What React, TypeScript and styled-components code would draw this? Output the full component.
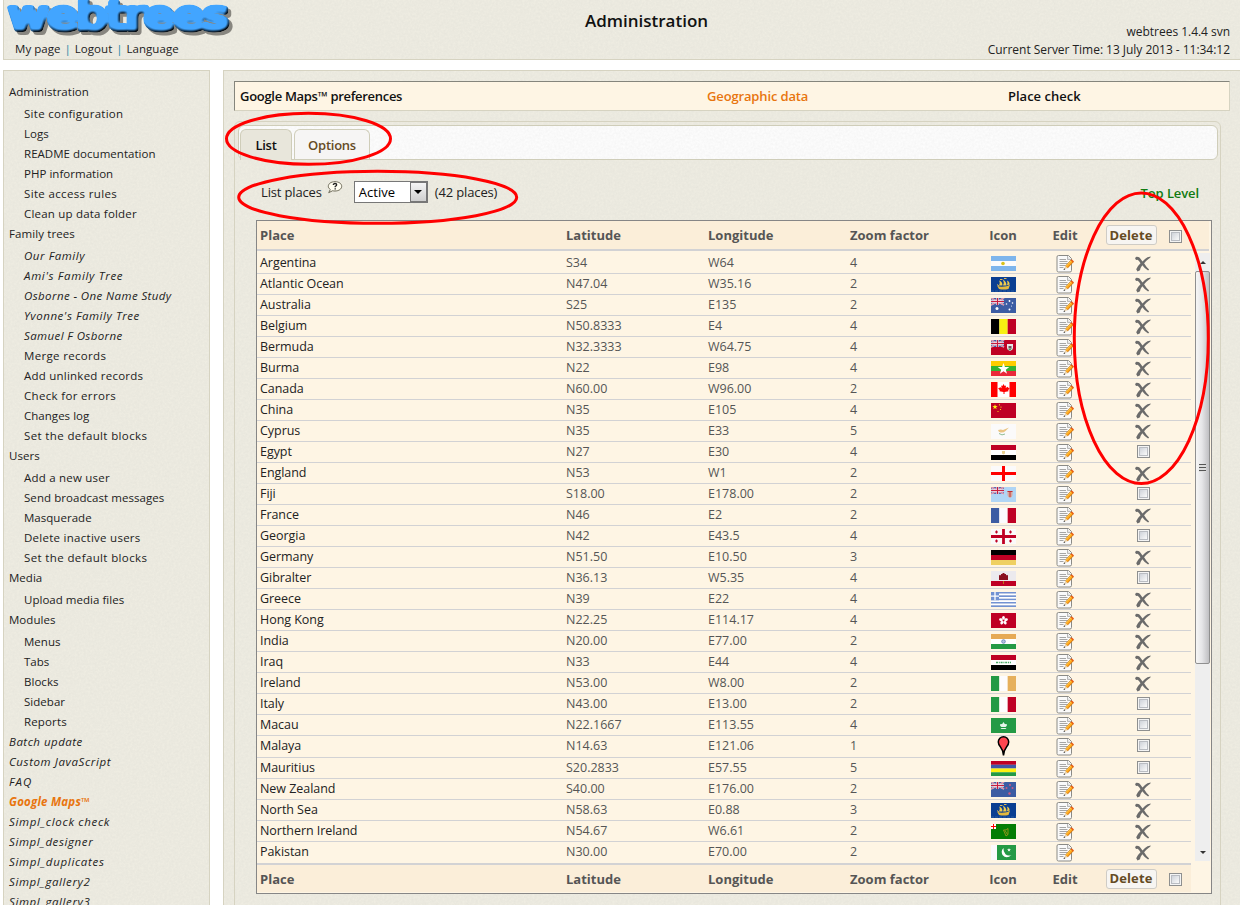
import React from 'react';
import styled, { createGlobalStyle, css } from 'styled-components';

const texture = (hex: string, a: number) =>
  `url("data:image/svg+xml,%3Csvg xmlns='http://www.w3.org/2000/svg' width='150' height='150'%3E%3Cfilter id='n'%3E%3CfeTurbulence type='fractalNoise' baseFrequency='.45' numOctaves='2' stitchTiles='stitch'/%3E%3CfeColorMatrix values='0 0 0 0 .${hex} 0 0 0 0 .${hex} 0 0 0 0 .${hex} ${a} 0 0 0 0'/%3E%3C/filter%3E%3Crect width='150' height='150' filter='url(%23n)'/%3E%3C/svg%3E")`;

const Global = createGlobalStyle`
  html, body { margin: 0; background: #fff; height: 905px; overflow: hidden; }
  * { box-sizing: border-box; }
  body { font-family: 'Open Sans', 'Noto Sans', sans-serif; font-size: 12px; color: #222; }
`;

const linen = css`
  background: ${texture('45', 0.16)} #f0eee3;
  border: 1px solid #d6d3c1;
`;
const Page = styled.div`position: relative; width: 1240px; height: 905px; overflow: hidden;`;
const Header = styled.header`
  ${linen}
  border-top: 0; border-right: 0;
  margin-left: 3px; height: 60px;
  display: grid; grid-template-columns: 400px 1fr 400px;
`;
const Brand = styled.div`display: flex; flex-direction: column;`;
const UserLinks = styled.nav`
  margin: 1px 0 0 11px; line-height: 18px; font-size: 11.5px; letter-spacing: 0.05px; white-space: pre;
`;
const Bar = styled.span`color: #1787a5; margin: 0 3.8px 0 4px;`;
const Title = styled.h1`
  margin: 9px 0 0 49px; text-align: center; font-size: 17px; font-weight: 600; line-height: 24px; color: #111;
`;
const Server = styled.div`
  text-align: right; font-size: 12px; line-height: 18px; padding: 23px 10px 0 0; letter-spacing: -0.03px;
`;
const Columns = styled.div`display: flex; gap: 13px; margin: 10px 0 0 3px; height: 835px;`;
const Sidebar = styled.aside`
  ${linen}
  border-bottom: 0; width: 207px; padding: 11px 0 0 5px; flex: none; overflow: hidden;
`;
const Item = styled.div<{ $sub?: boolean; $it?: boolean; $on?: boolean; $first?: boolean; $ls: number }>`
  height: 20px; line-height: 20px; white-space: nowrap; font-size: 11.5px; letter-spacing: ${p => p.$ls}px;
  padding-left: ${p => (p.$sub ? 15 : 0)}px;
  margin-top: ${p => (p.$first ? 2 : 0)}px;
  font-style: ${p => (p.$it ? 'italic' : 'normal')};
  ${p => p.$on && css`color: #e8750f; font-weight: 700;`}
`;
const Main = styled.main`
  ${linen}
  border-right: 0; border-bottom: 0; flex: 1; padding: 10px 10px 0 10px;
`;
const Prefs = styled.div`
  height: 30px; border: 1px solid #d6d3c1; border-top-color: #85857c; border-left-color: #85857c;
  background: #fef5e4; display: grid; grid-template-columns: 467px 301px 1fr; padding-left: 5px;
  line-height: 29px; font-size: 13px; font-weight: 600; color: #111; letter-spacing: -0.3px; white-space: nowrap;
`;
const PrefLink = styled.span<{ $on?: boolean }>`
  color: ${p => (p.$on ? '#e8750f' : '#111')}; letter-spacing: ${p => (p.$on ? -0.14 : 0)}px;
`;
const Tabs = styled.section`
  border: 1px solid #d6d3c1; border-radius: 6px; margin: 10px 9px 0 0; height: 900px; padding: 3px 2px 0 3px;
`;
const TabBar = styled.div`
  display: flex; align-items: flex-end; gap: 2px; height: 35px; padding-left: 1px;
  border: 1px solid #cfcdb9; border-radius: 6px; background: ${texture('60', 0.22)} #fff;
`;
const Tab = styled.div<{ $on?: boolean; $w: number }>`
  width: ${p => p.$w}px; height: ${p => (p.$on ? 31 : 30)}px; margin-bottom: ${p => (p.$on ? -1 : 0)}px;
  border: 1px solid #cfcdb9; border-bottom: 0; border-radius: 6px 6px 0 0; text-align: center; line-height: 31px;
  font-size: 13px; font-weight: 600; letter-spacing: -0.25px;
  color: ${p => (p.$on ? '#111' : '#654b24')};
  background: ${p => (p.$on ? '#e8e6db' : '#f6f5f4')};
`;
const Filter = styled.div`
  display: flex; align-items: center; height: 24px; margin: 20px 19px 0 23px; font-size: 13px; letter-spacing: -0.15px; white-space: nowrap;
`;
const HelpIcon = styled.svg`margin: -8px 11px 0 5px; width: 16px; height: 14px;`;
const Select = styled.div`
  width: 74px; height: 22px; border: 1px solid #777; background: #fff; display: flex; justify-content: space-between;
  padding: 0 0 0 4px; line-height: 20px; margin-right: 7px; color: #000; letter-spacing: 0;
`;
const Arrow = styled.span`
  width: 17px; height: 20px; border: 1px solid #777; background: linear-gradient(#f5f5f5, #cfcfcf);
  display: flex; align-items: center; justify-content: center;
  &::after { content: ''; border: 4px solid transparent; border-top-color: #000; border-bottom: 0; }
`;
const TopLevel = styled.span`margin: 2px 0 0 auto; color: #107a10; font-weight: 600; letter-spacing: -0.1px;`;
const Table = styled.div`
  margin: 16px 6px 0 18px; height: 674px; border: 1px solid #868686; background: #fef5e4;
`;
const grid = css`
  display: grid; align-items: center;
  grid-template-columns: 306px 142px 142px 120px 66px 58px 74px 26px;
  padding-left: 3px;
`;
const HeadRow = styled.div<{ $foot?: boolean }>`
  ${grid}
  height: ${p => (p.$foot ? 29 : 30)}px; width: ${p => (p.$foot ? 934 : 952)}px; background: #fbeed9;
  ${p => (p.$foot ? 'border-top: 2px solid #d2d2d4;' : 'border-bottom: 2px solid #d2d2d4;')}
  font-size: 13px; font-weight: 700; color: #555;
`;
const Center = styled.div<{ $dx?: number; $dy?: number }>`
  display: flex; justify-content: center; align-items: center; margin-left: ${p => p.$dx || 0}px;
  padding-top: ${p => p.$dy || 0}px;
`;
const DeleteBtn = styled.button`
  width: 51px; height: 20px; padding: 0; border: 1px solid #cfccc6; border-radius: 3px; background: #f7f5f2;
  color: #654b24; font: 700 13px/17px 'Open Sans', sans-serif; letter-spacing: 0.1px;
`;
const Check = styled.span<{ $dy?: number }>`
  width: 13px; height: 13px; border: 1px solid #8e8f8f; padding: 1px; margin-top: ${p => p.$dy || 0}px;
  background: #f4f4f4; display: flex;
  &::after { content: ''; flex: 1; border: 1px solid #b9bcc2; background: linear-gradient(135deg, #cfd3da, #fafafa); }
`;
const Scroll = styled.div`display: flex; justify-content: space-between; height: 612px; padding-top: 2px;`;
const Rows = styled.div`width: 934px;`;
const Row = styled.div<{ $tall?: boolean; $last?: boolean }>`
  ${grid}
  height: ${p => (p.$tall ? 22 : 21)}px;
  border-bottom: 1px solid ${p => (p.$last ? 'transparent' : '#d2d2d4')};
  font-size: 12.5px; line-height: 18px; color: #555;
  padding-bottom: ${p => (p.$tall ? 1 : 0)}px;
`;
const Place = styled.span`color: #222; letter-spacing: -0.05px;`;
const ScrollBar = styled.div`
  width: 15px; height: 608px; margin-right: 1px; background: #eeeeee; display: flex; flex-direction: column; align-items: center;
`;
const ScrollArrow = styled.span<{ $up?: boolean }>`
  height: 18px; display: flex; align-items: center;
  ${p => !p.$up && 'margin-top: auto;'}
  &::after {
    content: ''; border: 3.5px solid transparent;
    ${p => (p.$up ? 'border-bottom-color: #333; border-top: 0;' : 'border-top-color: #333; border-bottom: 0;')}
  }
`;
const Thumb = styled.span`
  width: 15px; height: 393px; border: 1px solid #8f8f8f; border-radius: 2px;
  background: linear-gradient(90deg, #f6f6f6, #e6e6e8 45%, #bfbfc2); display: flex; align-items: center; justify-content: center;
`;
const Grip = styled.span`
  width: 7px; height: 8px; background: repeating-linear-gradient(#555 0 1px, #ddd 1px 3px);
`;
const Marks = styled.svg`position: absolute; left: 0; top: 0; pointer-events: none;`;
const Logo = styled.svg`display: block; width: 240px; height: 39px; margin-left: -4px;`;
const LogoText = styled.text`
  font-family: 'DejaVu Sans', sans-serif; font-weight: 400; font-size: 38px; stroke-linejoin: round; stroke-linecap: round;
`;

const WebtreesLogo = () => (
  <Logo viewBox="0 0 240 39">
    <defs>
      <filter id="puffy" x="-5%" y="-20%" width="112%" height="150%" colorInterpolationFilters="sRGB">
        <feGaussianBlur in="SourceAlpha" stdDeviation="1.6" result="bump" />
        <feDiffuseLighting in="bump" surfaceScale="2.4" diffuseConstant="1.4" lightingColor="#fff" result="light">
          <feDistantLight azimuth="235" elevation="50" />
        </feDiffuseLighting>
        <feComposite in="SourceGraphic" in2="light" operator="arithmetic" k1="1" result="lit" />
        <feComposite in="lit" in2="SourceAlpha" operator="in" result="body" />
        <feOffset in="SourceAlpha" dx="2.500" dy="2.500" result="off" />
        <feGaussianBlur in="off" stdDeviation=".6" result="soft" />
        <feFlood floodColor="#77756f" floodOpacity=".85" />
        <feComposite in2="soft" operator="in" result="shade" />
        <feMerge><feMergeNode in="shade" /><feMergeNode in="body" /></feMerge>
      </filter>
    </defs>
    <LogoText x="9" y="29" textLength="219" lengthAdjust="spacingAndGlyphs" fill="#42a5ff" stroke="#42a5ff" strokeWidth="6.200" filter="url(#puffy)">webtrees</LogoText>
  </Logo>
);

const EditIcon = () => (
  <svg width="18" height="18" viewBox="0 0 18 18">
    <path d="M2.500 .5h10l3 3v12q0 1.500-1.500 1.500h-11.500q-1.500 0-1.500-1.500v-13.500q0-1.500 1.500-1.500z" fill="#fafafa" stroke="#8a8a86" />
    <path d="M11.500 1v3.500h3.500" fill="#e4e4e4" stroke="#aaa" strokeWidth=".8" />
    <path d="M3.500 4.500h6.500M3.500 6.500h8M3.500 8.500h8M3.500 10.500h6M3.500 12.500h4" stroke="#a6a6a6" />
    <path d="M16.200 6l-5.700 6" stroke="#c9720f" strokeWidth="3.400" />
    <path d="M16.200 6l-5.700 6" stroke="#ffa51f" strokeWidth="2.200" />
    <path d="M15.500 5.500l-5.500 5.800" stroke="#ffdc55" strokeWidth=".8" />
    <path d="M9.200 11l2.400 2-3.600 1.500z" fill="#e8cfa5" />
    <path d="M7.500 15l.7-1.700 1.100 1.100z" fill="#333" />
    <path d="M15.200 4.700l2.400 2.300" stroke="#e8560f" strokeWidth="1.400" />
  </svg>
);

const CrossIcon = () => (
  <svg width="16" height="16" viewBox="0 0 16 16">
    <path d="M0 2l1.500-1.300q3-.2 4 2l2 2.800q2.500-3 5-4.200l3.300-.8q-.2 1.300-2 2.300-2.500 1.600-4.700 4.400 2 3.500 5 6.300l-1 1q-3.500-2-5.800-5.300-2 2.500-2.300 5l-2.500 1.300-1.300-2.300q1.500-3.500 4.300-6-1.500-3-3-3.500l-1.500.300z" fill="#6b6b6b" />
  </svg>
);

const Union = ({ bg }: { bg: string }) => (
  <>
    <path fill={bg} d="M0 0h13v7H0z" />
    <path d="M0 0l13 7M13 0l-13 7" stroke="#e8dbe8" strokeWidth="1.600" />
    <path d="M0 0l13 7M13 0l-13 7" stroke="#cf3454" strokeWidth=".6" />
    <path d="M6.500 0v7M0 3.500h13" stroke="#f3e6ee" strokeWidth="2.400" />
    <path d="M6.500 0v7M0 3.500h13" stroke="#c81e3e" strokeWidth="1.200" />
  </>
);
const H = ({ c }: { c: string[] }) => <>{c.map((f, i) => <rect key={i} width="25" height={15 / c.length + 0.05} y={(i * 15) / c.length} fill={f} />)}</>;
const V = ({ c }: { c: string[] }) => <>{c.map((f, i) => <rect key={i} height="15" width={25 / c.length + 0.05} x={(i * 25) / c.length} fill={f} />)}</>;
const Bg = ({ f }: { f: string }) => <rect width="25" height="15" fill={f} />;
const star = 'M0-5L1.200-1.600H4.800L1.900.6L3 4L0 1.900L-3 4L-1.900.6L-4.800-1.600H-1.200z';

const ship = (
  <>
    <Bg f="#0b3f92" />
    <path d="M6 8.500q3 1.500 5 1.200 5 0 8-2l-1.500 4.300q-5 1.200-9.500 0z" fill="#e3b93c" />
    <path d="M8 8.500q1.500-2.500.2-5 3.300 1 3.300 5zM12 8.500q1.500-3 0-6 3.500 2 3.500 6zM16 8q1-2 0-4.500 3 1.500 2.500 4.200z" fill="#f0cb4c" />
    <path d="M9 2.500h2.500M13 1.500h2.500M6 7.500l2 1.500" stroke="#d9b85b" />
    <path d="M0 14h25" stroke="#2b5fa3" strokeDasharray="3 1" />
  </>
);

const flags: Record<string, React.ReactNode> = {
  ar: <><H c={['#7db5ec', '#fcfcfc', '#7db5ec']} /><circle cx="12" cy="7.500" r="1.800" fill="#d8c319" /></>,
  ship,
  au: <><Bg f="#3c5ca3" /><Union bg="#3c5ca3" /><g fill="#fff"><circle cx="6" cy="10.500" r="1.500" /><circle cx="15.500" cy="6" r=".8" /><circle cx="18.500" cy="3" r=".9" /><circle cx="21.500" cy="5" r=".8" /><circle cx="18.500" cy="11.500" r="1" /><circle cx="20.500" cy="8" r=".5" /></g></>,
  be: <V c={['#000', '#f7f012', '#bf0024']} />,
  bm: <><Bg f="#bf0024" /><Union bg="#3c5ca3" /><path d="M16 4h6v4q0 2-3 3-3-1-3-3z" fill="#e8e8e8" /><path d="M17.500 6h3v2.500h-3z" fill="#7a4a5c" /><path d="M17 9l4-.5-2 2z" fill="#3a9a50" /></>,
  mm: <><H c={['#fc0', '#35b233', '#ea2839']} /><path transform="translate(12.500 8) scale(1.200)" d={star} fill="#fff" /></>,
  ca: <><Bg f="#fff" /><path fill="#f00" d="M0 0h6.500v15H0zM18.500 0H25v15h-6.500z" /><path d="M12.500 2l1.200 2 1.300-.5-.3 2.500 2-1.200.5 1 1.500.2-1.500 2.200.3 1-4 .7v2h-1V10l-4-.8.3-1L7 6.300l1.500-.3.5-1 1.600 1.200-.4-2.700 1.200.5z" fill="#f00" /></>,
  cn: <><Bg f="#bf0024" /><path transform="translate(4 4) scale(.55)" d={star} fill="#fff112" /><g fill="#fff112"><circle cx="8.500" cy="1.800" r=".6" /><circle cx="10" cy="4" r=".6" /><circle cx="9.500" cy="6.500" r=".6" /><circle cx="7" cy="8.500" r=".6" /></g></>,
  cy: <><Bg f="#fbfafa" /><path d="M7 6q3-1 5 0l6-2.500-3.500 3.500q-2 2-5 1.500-2-.5-2.500-2.500z" fill="#eac483" /><path d="M8 9.500q3 2.500 6 .5" stroke="#8fbd94" fill="none" /></>,
  eg: <><H c={['#bf0024', '#fff', '#000']} /><path d="M11 6h3v2.500l-1.500 1-1.500-1z" fill="#ead08f" /></>,
  en: <><Bg f="#fbfafa" /><path d="M12.500 0v15M0 7.500h25" stroke="#f00" strokeWidth="3" /></>,
  fj: <><Bg f="#b0d5f5" /><Union bg="#5a6ab0" /><path d="M16.500 4h5v4q0 2-2.500 3-2.500-1-2.500-3z" fill="#d9a79c" /><path d="M16.500 4.500h5M19 5v5" stroke="#bf3136" /></>,
  fr: <V c={['#3c5ca3', '#fbfafd', '#bf0024']} />,
  ge: <><Bg f="#fbfafa" /><path d="M12.500 0v15M0 7.500h25" stroke="#bf0024" strokeWidth="2.800" /><path d="M5.500 1.500v3M4 3h3M19.500 1.500v3M18 3h3M5.500 10.500v3M4 12h3M19.500 10.500v3M18 12h3" stroke="#bf0024" strokeWidth="1.200" /></>,
  de: <H c={['#000', '#bf0024', '#efd062']} />,
  gi: <><Bg f="#eceaee" /><path fill="#bf0024" d="M0 10h25v5H0z" /><path d="M8 9V4.500l1-.8 1 .8V3h1.500V2h2v1H15v1.500l1-.8 1 .8V9z" fill="#8a1020" /><path d="M12.500 10v3" stroke="#b87818" /></>,
  gr: <><H c={['#7292d2', '#fff', '#7292d2', '#fff', '#7292d2', '#fff', '#7292d2', '#fff', '#7292d2']} /><path fill="#7292d2" d="M0 0h8v8.300H0z" /><path d="M4 0v8.300M0 4.200h8" stroke="#fff" strokeWidth="1.300" /></>,
  hk: <><Bg f="#bf0024" /><g transform="translate(12.500 7.500)" fill="#fff">{[0, 72, 144, 216, 288].map(r => <ellipse key={r} transform={`rotate(${r})`} cy="-2.700" rx="1.400" ry="1.900" />)}</g></>,
  in: <><H c={['#e6aa55', '#fff', '#249a45']} /><circle cx="12.500" cy="7.500" r="1.800" fill="#b8c4e0" stroke="#5f7bb8" strokeWidth=".8" /></>,
  iq: <><H c={['#bf0024', '#fff', '#000']} /><path d="M5 7.500h15" stroke="#4aa866" strokeWidth="1.600" strokeDasharray="2 .8 1 .8" /></>,
  ie: <V c={['#249a45', '#fdfcfd', '#e6b05c']} />,
  it: <V c={['#249a45', '#fdfcfd', '#bf0024']} />,
  mo: <><Bg f="#249a45" /><path d="M12.500 4l1.300 2 2.200.3-.3 1.700-1.200 1h-4l-1.300-1L9 6.300l2.200-.3zM9.500 10h6l-1 1h-4z" fill="#e7f5ea" /></>,
  mu: <H c={['#bf0024', '#4059a8', '#fff112', '#249a45']} />,
  nz: <><Bg f="#3c5ca3" /><Union bg="#3c5ca3" /><g fill="#cf5a80"><circle cx="19" cy="3" r="1" /><circle cx="15.500" cy="6" r="1" /><circle cx="21.500" cy="6" r="1" /><circle cx="18.500" cy="11.500" r="1.200" /></g></>,
  ni: <><Bg f="#047d04" /><path fill="#fff" d="M0 0h5v5H0z" /><path d="M2.500 0v5M0 2.500h5" stroke="#f00" /><path d="M12.500 6q3 .5 4.500-1.500v6l-2 1.500zM14 6.500l2.500 4" fill="none" stroke="#a89a20" strokeWidth=".8" /></>,
  pk: <><Bg f="#249a45" /><path fill="#fbfafd" d="M0 0h6v15H0z" /><path d="M12.500 3q-3 3-1 7 4 4.500 9 0-3.500 1.500-6-.8-2.500-2.500-2-6.200z" fill="#fff" /><path transform="translate(18 5) scale(.4)" d={star} fill="#fff" /></>,
};

const Flag = ({ id }: { id: string }) =>
  id === 'pin' ? (
    <svg width="13" height="20" viewBox="0 0 12 20">
      <path d="M6 19.500q-.2-5-3-8.500Q.8 8.500.8 6A5.200 5.200 0 0 1 11.200 6q0 2.500-2.200 5-2.800 3.500-3 8.500z" fill="#ff4650" stroke="#000" strokeWidth="1.500" />
    </svg>
  ) : (
    <svg width="25" height="15" viewBox="0 0 25 15">{flags[id]}</svg>
  );

const places = `Argentina,S34,W64,4,ar,x
Atlantic Ocean,N47.04,W35.16,2,ship,x
Australia,S25,E135,2,au,x
Belgium,N50.8333,E4,4,be,x
Bermuda,N32.3333,W64.75,4,bm,x
Burma,N22,E98,4,mm,x
Canada,N60.00,W96.00,2,ca,x
China,N35,E105,4,cn,x
Cyprus,N35,E33,5,cy,x
Egypt,N27,E30,4,eg,
England,N53,W1,2,en,x
Fiji,S18.00,E178.00,2,fj,
France,N46,E2,2,fr,x
Georgia,N42,E43.5,4,ge,
Germany,N51.50,E10.50,3,de,x
Gibralter,N36.13,W5.35,4,gi,
Greece,N39,E22,4,gr,x
Hong Kong,N22.25,E114.17,4,hk,x
India,N20.00,E77.00,2,in,x
Iraq,N33,E44,4,iq,x
Ireland,N53.00,W8.00,2,ie,x
Italy,N43.00,E13.00,2,it,
Macau,N22.1667,E113.55,4,mo,
Malaya,N14.63,E121.06,1,pin,
Mauritius,S20.2833,E57.55,5,mu,
New Zealand,S40.00,E176.00,2,nz,x
North Sea,N58.63,E0.88,3,ship,x
Northern Ireland,N54.67,W6.61,2,ni,x
Pakistan,N30.00,E70.00,2,pk,x`.split('\n').map(l => l.split(','));

// "-" marks a nested entry, "/" an italic one; the number after "|" is its tracking in px
const menu = `Administration
-Site configuration|.28
-Logs
-README documentation
-PHP information
-Site access rules|.35
-Clean up data folder|.2
Family trees|.1
-/Our Family|.55
-/Ami's Family Tree|.68
-/Osborne - One Name Study|.4
-/Yvonne's Family Tree|.55
-/Samuel F Osborne|.4
-Merge records|.33
-Add unlinked records|.23
-Check for errors|.33
-Changes log
-Set the default blocks|.37
Users
-Add a new user|.22
-Send broadcast messages|.06
-Masquerade
-Delete inactive users|.27
-Set the default blocks|.37
Media
-Upload media files
Modules
-Menus
-Tabs
-Blocks
-Sidebar
-Reports|.15
/Batch update|.48
/Custom JavaScript|.6
/FAQ|1
/Google Maps™|.22
/Simpl_clock check|.68
/Simpl_designer|.6
/Simpl_duplicates|.68
/Simpl_gallery2|.6
/Simpl_gallery3|.6`.split('\n').map(l => {
  const [key, tracking] = l.split('|');
  return {
    label: key.replace(/^-?\/?/, ''),
    sub: key.startsWith('-'),
    italic: /^-?\//.test(key),
    tracking: Number(tracking || 0.03),
  };
});

const Headings = ({ foot }: { foot?: boolean }) => (
  <HeadRow $foot={foot}>
    <span>Place</span><span>Latitude</span><span>Longitude</span><span>Zoom factor</span>
    <Center>Icon</Center><Center>Edit</Center>
    <Center><DeleteBtn>Delete</DeleteBtn></Center>
    <Center $dx={-11}><Check $dy={2} /></Center>
  </HeadRow>
);

export default function App() {
  return (
    <Page>
      <Global />
      <Header>
        <Brand>
          <WebtreesLogo />
          <UserLinks>My page<Bar>|</Bar>Logout<Bar>|</Bar>Language</UserLinks>
        </Brand>
        <Title>Administration</Title>
        <Server>webtrees 1.4.4 svn<br />Current Server Time: 13 July 2013 - 11:34:12</Server>
      </Header>
      <Columns>
        <Sidebar>
          {menu.map((m, i) => (
            <Item key={i} $sub={m.sub} $it={m.italic} $on={m.label.startsWith('Google')} $first={m.sub && !menu[i - 1].sub} $ls={m.tracking}>
              {m.label}
            </Item>
          ))}
        </Sidebar>
        <Main>
          <Prefs><span>Google Maps™ preferences</span><PrefLink $on>Geographic data</PrefLink><PrefLink>Place check</PrefLink></Prefs>
          <Tabs>
            <TabBar><Tab $on $w={52}>List</Tab><Tab $w={76}>Options</Tab></TabBar>
            <Filter>
              List places
              <HelpIcon viewBox="0 0 15 14">
                <path d="M7.500.700c4 0 6.700 2 6.700 4.600s-2.700 4.700-6.700 4.700c-1 0-1.500 0-2.300-.3l-4 2 1.600-3.200C1.500 7.500.800 6.500.800 5.300.800 2.700 3.500.700 7.500.700z" fill="#fffdf0" stroke="#6d6a58" />
                <path d="M5.800 4q0-1.500 1.700-1.500t1.700 1.300q0 .8-1.500 1.700v.8M7.700 7.300v1.200" fill="none" stroke="#222" strokeWidth="1.300" />
              </HelpIcon>
              <Select>Active<Arrow /></Select>
              (42 places)
              <TopLevel>Top Level</TopLevel>
            </Filter>
            <Table>
              <Headings />
              <Scroll>
                <Rows>
                  {places.map(([name, lat, lng, zoom, flag, used], i) => (
                    <Row key={name} $tall={flag === 'pin'} $last={i === places.length - 1}>
                      <Place>{name}</Place><span>{lat}</span><span>{lng}</span><span>{zoom}</span>
                      <Center><Flag id={flag} /></Center>
                      <Center $dx={-1} $dy={2}><EditIcon /></Center>
                      <Center $dx={24} $dy={used ? 1 : 0}>{used ? <CrossIcon /> : <Check $dy={-2} />}</Center>
                    </Row>
                  ))}
                </Rows>
                <ScrollBar><ScrollArrow $up /><Thumb><Grip /></Thumb><ScrollArrow /></ScrollBar>
              </Scroll>
              <Headings foot />
            </Table>
          </Tabs>
        </Main>
      </Columns>
      <Marks width="1240" height="905" fill="none" stroke="#f00" strokeWidth="3">
        <ellipse cx="308.500" cy="138.800" rx="82" ry="25.500" />
        <ellipse cx="377.700" cy="197.300" rx="139" ry="26" />
        <ellipse cx="1141.300" cy="338.300" rx="67" ry="145.300" />
      </Marks>
    </Page>
  );
}
